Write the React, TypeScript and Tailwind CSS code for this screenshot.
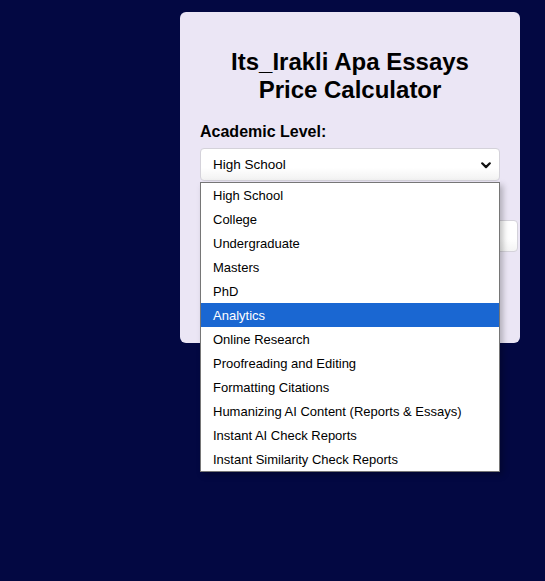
import React from 'react';

const levels = [
  'High School',
  'College',
  'Undergraduate',
  'Masters',
  'PhD',
  'Analytics',
  'Online Research',
  'Proofreading and Editing',
  'Formatting Citations',
  'Humanizing AI Content (Reports & Essays)',
  'Instant AI Check Reports',
  'Instant Similarity Check Reports',
];

const Chevron = () => (
  <svg width="10" height="7" viewBox="0 0 10 7" fill="none">
    <path d="M1.2 1.3 L5 5.1 L8.8 1.3" stroke="#111" strokeWidth="2.2" strokeLinecap="round" strokeLinejoin="round" />
  </svg>
);

export default function App() {
  const active = 'Analytics';

  return (
    <div className="min-h-[581px] w-full bg-[#030842] font-['Liberation_Sans',Arial,sans-serif] text-black">
      <div className="flex justify-end pr-[25px] pt-[12px]">
        <div className="relative w-[340px] h-[331px] rounded-[6px] bg-[#ebe6f5] px-[20px] pt-[36px]">
          <h2 className="text-center text-[24px] leading-[28px] font-bold">
            Its_Irakli Apa Essays
            <br />
            Price Calculator
          </h2>

          <label className="mt-[19px] block text-[16px] leading-[18px] font-bold">Academic Level:</label>
          <div className="relative mt-[7px]">
            <div className="flex h-[33px] w-[300px] items-center justify-between rounded-[4px] border border-[#d4d2da] bg-gradient-to-b from-white from-60% to-[#f2f2f2] pl-[12px] pr-[8px] pt-px text-[13.5px]">
              <span>High School</span>
              <Chevron />
            </div>

            {/* open options list */}
            <div className="absolute left-0 top-[34px] z-10 w-[300px] border border-[#767676] bg-white shadow-[3px_3px_6px_rgba(0,0,0,0.25)]">
              {levels.map((lvl) => (
                <div
                  key={lvl}
                  className={
                    lvl === active
                      ? 'flex h-[24px] items-center bg-[#1a67d2] pl-[12px] pt-px text-[13px] text-white'
                      : 'flex h-[24px] items-center pl-[12px] pt-px text-[13px] text-black'
                  }
                >
                  {lvl}
                </div>
              ))}
            </div>
          </div>

          {/* pages input, mostly hidden under the open list */}
          <div className="mt-[39px] h-[32px] w-[318px] rounded-[4px] border border-[#d4d2da] bg-gradient-to-b from-white from-60% to-[#f4f4f4]" />
        </div>
      </div>
    </div>
  );
}
